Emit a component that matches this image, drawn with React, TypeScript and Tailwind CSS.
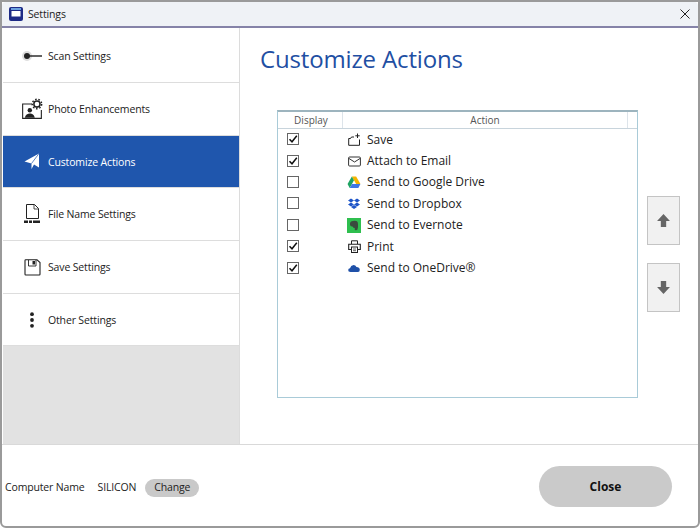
import React from "react";

function ScanIcon() {
  return (
    <svg width="22" height="14" viewBox="0 0 22 14">
      <circle cx="6" cy="7" r="5" fill="#ddd" />
      <circle cx="6" cy="7" r="3" fill="#222" />
      <rect x="8" y="6.3" width="13" height="1.4" fill="#222" />
    </svg>
  );
}

function PhotoIcon() {
  return (
    <svg width="22" height="22" viewBox="0 0 20 20">
      <path d="M10 5.500H1.500V18.500H18.500V11" fill="none" stroke="#222" strokeWidth="1" />
      <circle cx="8" cy="11.200" r="2" fill="#222" />
      <path d="M3.500 18c.5-3 2.500-4 4.500-4s4 1 4.500 4z" fill="#222" />
      <circle cx="14.500" cy="5.500" r="2.800" fill="none" stroke="#222" strokeWidth="1.400" />
      <circle cx="14.500" cy="5.500" r="4.300" fill="none" stroke="#222" strokeWidth="1.300" strokeDasharray="1.500 1.500" />
    </svg>
  );
}

function SendIcon() {
  return (
    <svg width="16" height="17" viewBox="0 0 16 17">
      <path d="M15 .5V14.500L10 11.500L7.500 16V10.500L.5 8.500z" fill="#fff" />
      <path d="M7.500 10.500L15 .5" stroke="#1f56ad" strokeWidth=".7" />
    </svg>
  );
}

function FileIcon() {
  return (
    <svg width="18" height="21" viewBox="0 0 18 21">
      <path d="M3.500.5H11.500L15.500 4.500V14.500H3.500z" fill="none" stroke="#222" strokeWidth="1" />
      <path d="M11 .5V5H15.500" fill="none" stroke="#222" strokeWidth=".8" />
      <rect x="1" y="16.500" width="4" height="2.500" fill="#222" />
      <rect x="6" y="16.500" width="3" height="2.500" fill="#222" />
      <rect x="10" y="16.500" width="7" height="2.500" fill="#222" />
    </svg>
  );
}

function SaveIcon() {
  return (
    <svg width="17" height="17" viewBox="0 0 17 17">
      <path d="M1 1.500Q1 .8 1.700 .8H13L16 3.500V15.300Q16 16 15.300 16H1.700Q1 16 1 15.300z" fill="none" stroke="#222" strokeWidth="1.100" />
      <path d="M4.500 1V7H12V1" fill="none" stroke="#222" strokeWidth=".9" />
      <rect x="8.500" y="2" width="2.500" height="3.500" fill="#222" />
    </svg>
  );
}

function DotsIcon() {
  return (
    <svg width="6" height="16" viewBox="0 0 6 16">
      <circle cx="3" cy="2.200" r="1.900" fill="#222" />
      <circle cx="3" cy="8" r="1.900" fill="#222" />
      <circle cx="3" cy="13.800" r="1.900" fill="#222" />
    </svg>
  );
}

const menu = [
  { label: "Scan Settings", icon: <ScanIcon />, h: "h-[53px]" },
  { label: "Photo Enhancements", icon: <PhotoIcon />, h: "h-[53px]" },
  { label: "Customize Actions", icon: <SendIcon />, h: "h-[52px]", active: true },
  { label: "File Name Settings", icon: <FileIcon />, h: "h-[53px]" },
  { label: "Save Settings", icon: <SaveIcon />, h: "h-[53px]" },
  { label: "Other Settings", icon: <DotsIcon />, h: "h-[52px]" },
];

function ActionIcon({ name }: { name: string }) {
  if (name === "save")
    return (
      <svg width="13" height="13" viewBox="0 0 13 13">
        <path d="M6 4H3.500L2.500 5.500H.7V12.300H11.500V6.500" fill="none" stroke="#222" strokeWidth="1" />
        <path d="M9.500 .5V5M7.300 2.800H11.700" stroke="#222" strokeWidth="1" />
      </svg>
    );
  if (name === "mail")
    return (
      <svg width="13" height="11" viewBox="0 0 13 11">
        <rect x=".6" y="1" width="11.800" height="9" rx="1" fill="none" stroke="#333" strokeWidth="1" />
        <path d="M1 2.500L6.500 6L12 2.500" fill="none" stroke="#333" strokeWidth="1" />
      </svg>
    );
  if (name === "drive")
    return (
      <svg width="14" height="13" viewBox="0 0 13 12">
        <path d="M4.500 .5H8.500L12.500 7.500H8.500z" fill="#f5b400" />
        <path d="M4.500 .5L.5 7.500L2.500 11L6.500 4z" fill="#1fa463" />
        <path d="M4.700 7.500H12.500L10.500 11H2.500z" fill="#3f77e4" />
      </svg>
    );
  if (name === "dropbox")
    return (
      <svg width="12" height="11" viewBox="0 0 12 11">
        <path d="M3 .5L6 2.500L3 4.500L0 2.500z M9 .5L12 2.500L9 4.500L6 2.500z M3 4.500L6 6.500L3 8.500L0 6.500z M9 4.500L12 6.500L9 8.500L6 6.500z M3 9L6 7L9 9L6 11z" fill="#1f56c9" />
      </svg>
    );
  if (name === "evernote")
    return (
      <div className="w-[14px] h-[15px] bg-[#2fbf4f] flex items-center justify-center">
        <svg width="10" height="11" viewBox="0 0 10 11">
          <path d="M2 1.500Q5 .3 7.500 1Q9 1.500 9 4Q9.300 8 8.500 9.500Q7.500 10.800 6 10Q5 9 6 8Q4 8 3.500 6.500Q1.500 6.500 1 5V3z" fill="#3a4a3e" />
        </svg>
      </div>
    );
  if (name === "print")
    return (
      <svg width="13" height="13" viewBox="0 0 13 13">
        <path d="M3.500 4V.8H9.500V4" fill="none" stroke="#222" strokeWidth="1" />
        <path d="M3 9.500H.7V4.300H12.300V9.500H10" fill="none" stroke="#222" strokeWidth="1.100" />
        <rect x="3.500" y="7" width="6" height="5.500" fill="#fff" stroke="#222" strokeWidth="1" />
        <path d="M5 9H8M5 10.700H8" stroke="#222" strokeWidth=".7" />
      </svg>
    );
  return (
    <svg width="12" height="8" viewBox="0 0 12 8">
      <path d="M2.500 8Q0 8 .2 6Q.3 4.500 2 4.300Q2.700 1.500 5.500 1Q7.500 1 8.500 3Q11.500 3 11.800 5.800Q11.800 8 10 8z" fill="#1f50a8" />
    </svg>
  );
}

const actions = [
  { label: "Save", icon: "save", checked: true },
  { label: "Attach to Email", icon: "mail", checked: true },
  { label: "Send to Google Drive", icon: "drive", checked: false },
  { label: "Send to Dropbox", icon: "dropbox", checked: false },
  { label: "Send to Evernote", icon: "evernote", checked: false },
  { label: "Print", icon: "print", checked: true },
  { label: "Send to OneDrive®", icon: "onedrive", checked: true },
];

function Check({ checked }: { checked: boolean }) {
  return (
    <div className="w-[12px] h-[12px] mb-[1px] border border-[#666] bg-white flex items-center justify-center">
      {checked && (
        <svg width="10" height="10" viewBox="0 0 10 10">
          <path d="M1.500 5.200L4 7.800L8.800 1.800" fill="none" stroke="#111" strokeWidth="1.500" />
        </svg>
      )}
    </div>
  );
}

function ArrowButton({ up }: { up?: boolean }) {
  return (
    <button className="w-[33px] h-[49px] bg-[#f1f1f1] border border-[#c4c4c4] flex items-center justify-center">
      <svg width="15" height="15" viewBox="0 0 14 14" className={up ? "" : "rotate-180"}>
        <path d="M7 1L13 7.500H9.500V13H4.500V7.500H1z" fill="#666" />
      </svg>
    </button>
  );
}

export default function App() {
  return (
    <div className="w-[700px] h-[528px] bg-white flex flex-col font-['Open_Sans','Noto_Sans',sans-serif] text-[#222] overflow-hidden rounded-b-[6px] border-2 border-[#9a9a9a]">
      {/* title bar */}
      <div className="h-[26px] shrink-0 bg-[#eff2f6] border-b-2 border-[#8583a8] flex items-center justify-between pl-[6px] pr-[7px] rounded-t-[4px]">
        <div className="flex items-center gap-[4px]">
          <svg width="16" height="16" viewBox="0 0 16 16">
            <rect x="1" y="1" width="14" height="14" rx="2" fill="#1d2a86" />
            <rect x="3.500" y="5" width="9" height="5.500" fill="#fff" />
            <rect x="3" y="2" width="10" height="2" fill="#6aa0e0" />
          </svg>
          <span className="text-[10.500px] tracking-[-0.15px] pt-[1px]">Settings</span>
        </div>
        <svg width="12" height="12" viewBox="0 0 12 12">
          <path d="M1.500 1.500L10.500 10.500M10.500 1.500L1.500 10.500" stroke="#222" strokeWidth="1" />
        </svg>
      </div>

      <div className="flex-1 flex min-h-0">
        {/* sidebar */}
        <div className="w-[237px] shrink-0 ml-[1px] flex flex-col bg-[#e2e2e2] border-r border-[#dcdcdc]">
          <div className="h-[2px] bg-white shrink-0" />
          {menu.map((m) => (
            <div
              key={m.label}
              className={`${m.h} shrink-0 flex items-center border-b border-[#dddddd] ${m.active ? "bg-[#1f56ad] text-white" : "bg-white"}`}
            >
              <div className="w-[45px] flex items-center justify-center pl-[13px] shrink-0">{m.icon}</div>
              <span className="text-[10.500px] tracking-[-0.15px] pt-[2px]">{m.label}</span>
            </div>
          ))}
        </div>

        {/* main */}
        <div className="flex-1 min-w-0 pl-[20px]">
          <h1 className="text-[24px] leading-[34px] mt-[14px] tracking-[-0.15px] text-[#1f4fa3]">Customize Actions</h1>
          <div className="flex mt-[34px] ml-[17px]">
            <div className="w-[361px] h-[288px] border border-[#a9cbd8] border-t-[#9db4be] border-t-2">
              <div className="h-[17px] flex border-b border-[#c8d4dc] text-[10px] text-[#555]">
                <div className="w-[65px] border-r border-[#dde4ea] flex items-center justify-center pl-[2px]">Display</div>
                <div className="w-[285px] border-r border-[#dde4ea] flex items-center justify-center">Action</div>
              </div>
              {actions.map((a) => (
                <div key={a.label} className="h-[21.400px] flex items-center">
                  <div className="w-[65px] pl-[9px]">
                    <Check checked={a.checked} />
                  </div>
                  <div className="w-[18px] ml-[2px] flex justify-center">
                    <ActionIcon name={a.icon} />
                  </div>
                  <span className="ml-[4px] text-[12px]">{a.label}</span>
                </div>
              ))}
            </div>
            <div className="ml-[9px] mt-[86px] flex flex-col gap-[18px]">
              <ArrowButton up />
              <ArrowButton />
            </div>
          </div>
        </div>
      </div>

      {/* footer */}
      <div className="h-[82px] shrink-0 border-t border-[#d9d9d9] flex items-center justify-between pt-[2px] pl-[3px] pr-[26px]">
        <div className="flex items-center text-[10.500px] tracking-[-0.15px] mt-[2px]">
          <span>Computer Name</span>
          <span className="ml-[13px]">SILICON</span>
          <span className="ml-[9px] h-[18px] w-[54px] rounded-full bg-[#c9c9c9] flex items-center justify-center">Change</span>
        </div>
        <button className="w-[133px] h-[41px] rounded-full bg-[#cacaca] text-[12px] font-bold text-[#111]">Close</button>
      </div>
    </div>
  );
}
